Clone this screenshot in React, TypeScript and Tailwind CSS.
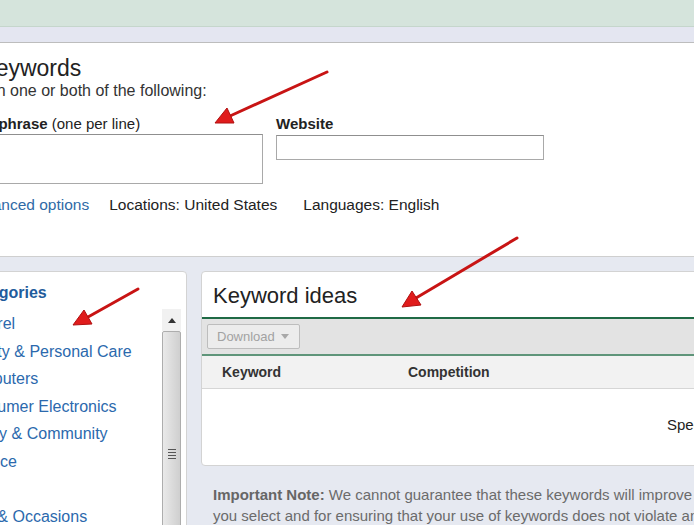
import React from "react";

const categories = [
  "Apparel",
  "Beauty & Personal Care",
  "Computers",
  "Consumer Electronics",
  "Family & Community",
  "Finance",
  "Food",
  "Gifts & Occasions",
  "Health",
];

const Arrows = () => (
  <svg className="absolute inset-0 pointer-events-none" width="694" height="525" viewBox="0 0 694 525">
    <g stroke="#c81414" strokeWidth="3" strokeLinecap="round">
      <line x1="327" y1="72" x2="230" y2="116" />
      <line x1="517" y1="238" x2="416" y2="298" />
      <line x1="138" y1="289" x2="88" y2="317" />
    </g>
    <g fill="#e01c1c" stroke="#b01010" strokeWidth="1">
      <polygon points="215,123 234,123 227,108" />
      <polygon points="402,307 421,305 412,291" />
      <polygon points="73,325 92,324 84,310" />
    </g>
  </svg>
);

export default function App() {
  return (
    <div className="relative w-[694px] h-[525px] overflow-hidden bg-[#e6e9f1] font-['Liberation_Sans',Arial,sans-serif] text-[#222]">
      <div className="h-[27px] bg-[#d5e4dc] border-b border-[#c5d6cc]" />
      <div className="h-[16px] bg-[#e4e6f1] border-b border-[#bdbdbd]" />

      {/* search form */}
      <div className="h-[214px] bg-white border-b border-[#cfcfcf] pt-[13px]">
        <div className="ml-[-58px]">
          <h1 className="ml-[-9px] text-[23px] leading-[25px] text-[#222]">Find keywords</h1>
          <p className="ml-[-4px] text-[16px] leading-[19px] text-[#333]">Based on one or both of the following:</p>
          <div className="flex gap-[13px] mt-[15px]">
            <div>
              <div className="ml-[-5px] text-[15px] leading-[18px] text-[#222]">
                <span className="font-bold">Word or phrase</span> (one per line)
              </div>
              <div className="mt-[1px] w-[321px] h-[50px] border border-[#a9a9a9] border-t-[#8f8f8f]" />
            </div>
            <div>
              <div className="text-[15px] leading-[18px] font-bold text-[#222]">Website</div>
              <div className="mt-[2px] w-[268px] h-[25px] border border-[#a9a9a9] border-t-[#8f8f8f]" />
            </div>
          </div>
          <div className="flex mt-[12px] pl-[24px] text-[15.5px] leading-[18px] whitespace-nowrap">
            <span className="text-[#2f6aa6]">Advanced options</span>
            <span className="ml-[20px] text-[#222]">Locations: United States</span>
            <span className="ml-[26px] text-[#222]">Languages: English</span>
          </div>
        </div>
      </div>

      <div className="flex items-start gap-[14px] mt-[14px]">
        {/* categories */}
        <div className="w-[240px] ml-[-53px] h-[300px] shrink-0 bg-white border border-[#d3d3d3] rounded-tr-[4px] flex flex-col">
          <div className="pl-[16px] pt-[12px] text-[16px] leading-[18px] font-bold text-[#1f5c9c]">Categories</div>
          <div className="flex mt-[8px]">
            <ul className="flex-1 pl-[12px] text-[16px] leading-[27.5px] text-[#2b69ad] whitespace-nowrap">
              {categories.map((c) => (
                <li key={c}>{c}</li>
              ))}
            </ul>
            <div className="w-[19px] mr-[5px] -mt-[1px] flex flex-col">
              <div className="h-[22px] bg-[#f1f1f1] flex items-center justify-center">
                <svg width="8" height="5" viewBox="0 0 8 5">
                  <polygon points="0,5 8,5 4,0" fill="#333" />
                </svg>
              </div>
              <div className="h-[200px] border border-[#adadad] rounded-[2px] bg-gradient-to-r from-[#e9e9e9] via-[#dcdcdc] to-[#cfcfcf] flex flex-col items-center pt-[117px] gap-[2px]">
                <div className="w-[8px] h-[1px] bg-[#555]" />
                <div className="w-[8px] h-[1px] bg-[#555]" />
                <div className="w-[8px] h-[1px] bg-[#555]" />
                <div className="w-[8px] h-[1px] bg-[#555]" />
              </div>
            </div>
          </div>
        </div>

        {/* keyword ideas */}
        <div className="flex flex-col shrink-0">
          <div className="w-[620px] bg-white border border-[#d3d3d3] rounded-[4px] overflow-hidden">
            <div className="pl-[11px] pt-[11px] pb-[9px] text-[22px] leading-[25px] text-[#222]">Keyword ideas</div>
            <div className="h-[2px] bg-[#1f6a45]" />
            <div className="h-[35px] bg-[#e3e3e3] flex items-center pl-[5px]">
              <div className="h-[25px] w-[93px] border border-[#bdbdbd] rounded-[2px] bg-[#ececec] flex items-center pl-[9px] gap-[6px] text-[13px] text-[#a2a2a2]">
                Download
                <svg width="8" height="5" viewBox="0 0 8 5">
                  <polygon points="0,0 8,0 4,5" fill="#a8a8a8" />
                </svg>
              </div>
            </div>
            <div className="h-[2px] bg-[#5f957a]" />
            <div className="h-[33px] bg-[#f2f2f2] border-b border-[#d6d6d6] flex items-center text-[14px] font-bold text-[#333]">
              <span className="ml-[20px] w-[186px]">Keyword</span>
              <span>Competition</span>
            </div>
            <div className="h-[76px] pt-[27px] pl-[465px] text-[15px] leading-[18px] text-[#222] whitespace-nowrap">
              Specify a word or phrase or website to see keyword ideas.
            </div>
          </div>
          <p className="mt-[18px] pl-[12px] text-[15px] leading-[21px] text-[#6b6b6b] whitespace-nowrap">
            <span className="font-bold text-[#666]">Important Note:</span> We cannot guarantee that these keywords will improve your campaign performance.
            <br />
            you select and for ensuring that your use of keywords does not violate any applicable laws.
          </p>
        </div>
      </div>

      <Arrows />
    </div>
  );
}
